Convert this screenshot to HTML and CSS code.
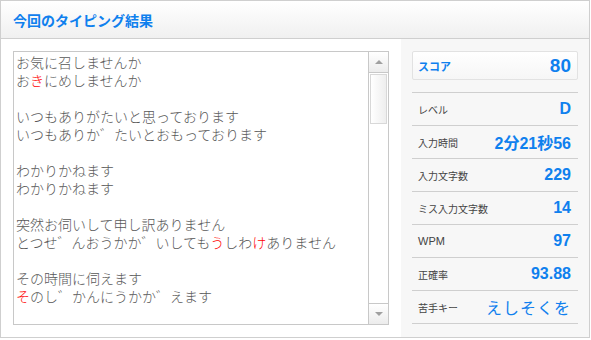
FILE: index.html
```html
<!DOCTYPE html>
<html>
<head>
	<meta charset="utf-8">
	<title>今回のタイピング結果</title>
	<link rel="stylesheet" href="styles.css">
</head>
<body>
	<div class="result">
		<div class="resultHead">
			<h2 class="resultTitle">今回のタイピング結果</h2>
		</div>

		<div class="resultBody">
			<div class="typed">
				<div class="typedBox">
					<div class="typedText">
						<div class="line">お気に召しませんか</div>
						<div class="line">お<span class="miss">き</span>にめしませんか</div>
						<div class="line"></div>
						<div class="line">いつもありがたいと思っております</div>
						<div class="line">いつもありか゛たいとおもっております</div>
						<div class="line"></div>
						<div class="line">わかりかねます</div>
						<div class="line">わかりかねます</div>
						<div class="line"></div>
						<div class="line">突然お伺いして申し訳ありません</div>
						<div class="line">とつせ゛んおうかか゛いしても<span class="miss">う</span>しわ<span class="miss">け</span>ありません</div>
						<div class="line"></div>
						<div class="line">その時間に伺えます</div>
						<div class="line"><span class="miss">そ</span>のし゛かんにうかか゛えます</div>
					</div>

					<div class="scroll">
						<div class="scrollBtn"><span class="arrowUp"></span></div>
						<div class="scrollTrack"><div class="scrollThumb"></div></div>
						<div class="scrollBtn"><span class="arrowDown"></span></div>
					</div>
				</div>
			</div>

			<div class="stats">
				<div class="score">
					<span class="scoreLabel">スコア</span>
					<span class="scoreValue">80</span>
				</div>

				<ul class="statList">
					<li class="stat"><span class="statLabel">レベル</span><span class="statValue">D</span></li>
					<li class="stat"><span class="statLabel">入力時間</span><span class="statValue">2分21秒56</span></li>
					<li class="stat"><span class="statLabel">入力文字数</span><span class="statValue">229</span></li>
					<li class="stat"><span class="statLabel">ミス入力文字数</span><span class="statValue">14</span></li>
					<li class="stat"><span class="statLabel wpm">WPM</span><span class="statValue">97</span></li>
					<li class="stat"><span class="statLabel">正確率</span><span class="statValue">93.88</span></li>
					<li class="stat"><span class="statLabel">苦手キー</span><span class="statValue keys">えしそくを</span></li>
				</ul>
			</div>
		</div>
	</div>
</body>
</html>
```

FILE: styles.css
```css
:root {
	--lineColor: #cfcfcf;
	--blueColor: #0f80ee;
	--textColor: #585858;
	--missColor: #ff0000;
}

body {
	margin: 0;
	font-family: "Liberation Sans", "Noto Sans CJK JP", sans-serif;
}

.result {
	width: 588px;
	height: 336px;
	border: 1px solid var(--lineColor);
	display: flex;
	flex-direction: column;
}

.resultHead {
	height: 37px;
	border-bottom: 1px solid var(--lineColor);
	background: linear-gradient(#ffffff, #f0f0f0);
	display: flex;
	align-items: center;
	padding-left: 12px;
}

.resultTitle {
	margin: 0;
	font-size: 14px;
	font-weight: bold;
	color: var(--blueColor);
	font-family: "Noto Sans CJK JP", sans-serif;
	line-height: 1;
}

.resultBody {
	flex: 1;
	display: flex;
}

.typed {
	width: 376px;
	padding: 12px;
}

.typedBox {
	height: 272px;
	border: 1px solid #c8c8c8;
	display: flex;
}

.typedText {
	flex: 1;
	padding: 1px 2px;
	font-family: "Noto Sans CJK JP", sans-serif;
	font-size: 14px;
	font-weight: 300;
	color: var(--textColor);
	overflow: hidden;
}

.line {
	height: 18px;
	line-height: 18px;
	white-space: nowrap;
}

.miss {
	display: inline-block;
	height: 18px;
	line-height: 18px;
	vertical-align: top;
	color: var(--missColor);
}

.scroll {
	width: 19px;
	border-left: 1px solid #c8c8c8;
	display: flex;
	flex-direction: column;
}

.scrollBtn {
	height: 20px;
	background: linear-gradient(#ffffff, #ececec);
	display: flex;
	align-items: center;
	justify-content: center;
}

.scrollBtn:first-child {
	border-bottom: 1px solid #c8c8c8;
}

.scrollBtn:last-child {
	border-top: 1px solid #c8c8c8;
}

.arrowUp {
	border-left: 4px solid transparent;
	border-right: 4px solid transparent;
	border-bottom: 4px solid #a0a0a0;
}

.arrowDown {
	border-left: 4px solid transparent;
	border-right: 4px solid transparent;
	border-top: 4px solid #a0a0a0;
}

.scrollTrack {
	flex: 1;
	padding: 1px 1px;
}

.scrollThumb {
	height: 48px;
	border: 1px solid #d8d8d8;
	background: linear-gradient(90deg, #ffffff, #eeeeee);
}

.stats {
	flex: 1;
	background-color: #f7f7f7;
	padding: 12px 11px 0 11px;
}

.score {
	height: 27px;
	border: 1px solid #e2e2e2;
	border-radius: 2px;
	background: linear-gradient(#ffffff, #f6f6f6);
	display: flex;
	align-items: center;
	justify-content: space-between;
	padding: 0 6px 0 5px;
	margin-bottom: 12px;
}

.scoreLabel {
	font-family: "Noto Sans CJK JP", sans-serif;
	font-size: 11px;
	font-weight: bold;
	color: var(--blueColor);
}

.scoreValue {
	font-size: 19px;
	font-weight: bold;
	color: var(--blueColor);
}

.statList {
	list-style: none;
	margin: 0;
	padding: 0;
	border-bottom: 1px solid var(--lineColor);
}

.stat {
	height: 32px;
	border-top: 1px solid var(--lineColor);
	display: flex;
	align-items: center;
	justify-content: space-between;
	padding: 0 7px 0 6px;
}

.statLabel {
	font-family: "Noto Sans CJK JP", sans-serif;
	font-size: 10px;
	color: #444444;
}

.statLabel.wpm {
	font-family: "Liberation Sans", sans-serif;
	font-size: 11px;
}

.statValue {
	font-size: 16px;
	font-weight: bold;
	color: var(--blueColor);
}

.statValue.keys {
	font-family: "Noto Sans CJK JP", sans-serif;
	font-weight: normal;
	font-size: 16px;
	letter-spacing: 1px;
}
```
